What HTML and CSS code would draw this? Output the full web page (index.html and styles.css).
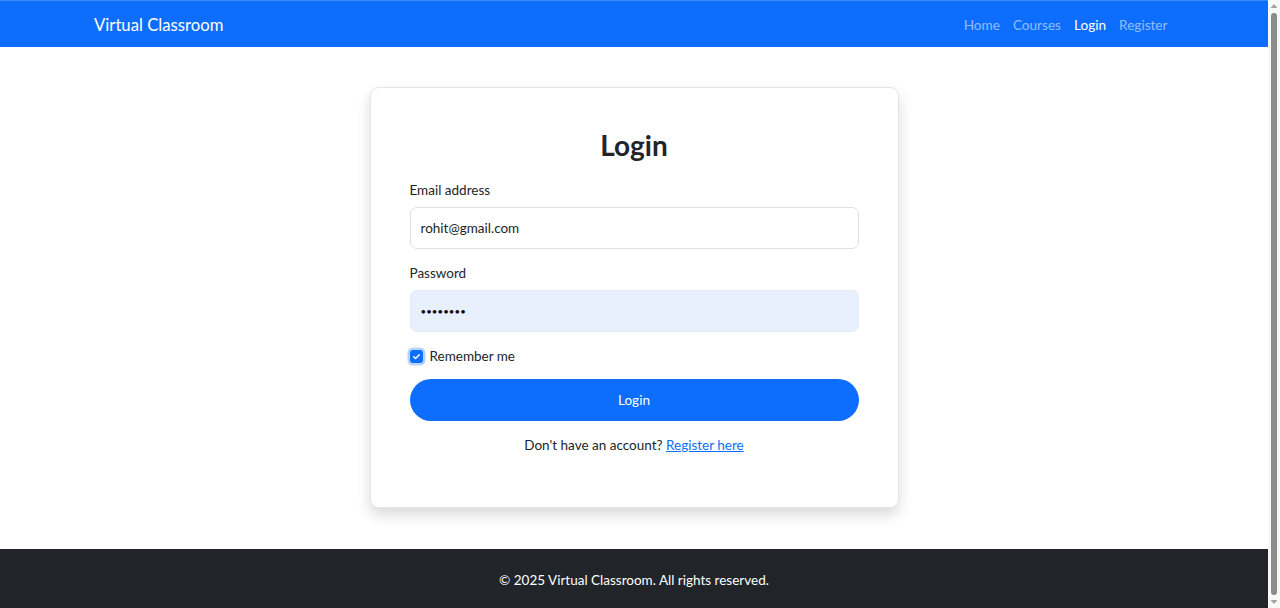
FILE: index.html
```html
<!DOCTYPE html>
<html lang="en">
<head>
    <meta charset="UTF-8">
    <meta name="viewport" content="width=device-width, initial-scale=1.0">
    <title>Login - Virtual Classroom</title>
    <link rel="stylesheet" href="styles.css">
</head>
<body>

    <nav class="navbar">
        <div class="nav-inner">
            <a class="brand" href="#">Virtual Classroom</a>
            <ul class="nav-links">
                <li><a href="#">Home</a></li>
                <li><a href="#">Courses</a></li>
                <li><a class="active" href="#">Login</a></li>
                <li><a href="#">Register</a></li>
            </ul>
        </div>
    </nav>

    <main class="page">
        <div class="card">
            <h2 class="card-title">Login</h2>

            <form class="login-form">
                <div class="field">
                    <label for="email">Email address</label>
                    <input type="email" id="email" class="input" value="rohit@gmail.com">
                </div>

                <div class="field">
                    <label for="password">Password</label>
                    <input type="text" id="password" class="input autofill" value="••••••••">
                </div>

                <div class="check-row">
                    <span class="check-box">
                        <svg width="9" height="9" viewBox="0 0 16 16"><path d="M3 8.5l3.2 3.2L13 4.8" fill="none" stroke="#fff" stroke-width="2.6" stroke-linecap="round" stroke-linejoin="round"/></svg>
                    </span>
                    <label>Remember me</label>
                </div>

                <button type="button" class="btn-login">Login</button>

                <p class="register-text">Don't have an account? <a href="#">Register here</a></p>
            </form>
        </div>
    </main>

    <footer class="footer">
        <p>&copy; 2025 Virtual Classroom. All rights reserved.</p>
    </footer>

    <!-- window scrollbar -->
    <div class="scrollbar">
        <svg class="arrow" width="12" height="12" viewBox="0 0 12 12"><path d="M2.5 8h7L6 4z" fill="#a3a3a3"/></svg>
        <div class="thumb"></div>
        <svg class="arrow" width="12" height="12" viewBox="0 0 12 12"><path d="M2.5 4h7L6 8z" fill="#a3a3a3"/></svg>
    </div>

</body>
</html>
```

FILE: styles.css
```css
body {
    margin: 0 12px 0 0;
    font-family: Lato, "Noto Sans", sans-serif;
    font-size: 13.5px;
    line-height: 1.5;
    color: #212529;
    background-color: #fff;
}
a {
    color: #0d6efd;
}

/* navbar */
.navbar {
    background-color: #0d6efd;
    height: 47px;
    border-top: 1px solid #3d8bfd;
    box-sizing: border-box;
}
.nav-inner {
    display: flex;
    align-items: center;
    justify-content: space-between;
    height: 100%;
    padding: 2px 94px 0;
    box-sizing: border-box;
}
.brand {
    color: #fff;
    font-size: 16.7px;
    text-decoration: none;
    padding-top: 1px;
}
.nav-links {
    display: flex;
    list-style: none;
    margin: 0;
    padding: 0;
}
.nav-links a {
    display: block;
    padding: 4px 6.5px;
    color: rgba(255, 255, 255, 0.55);
    text-decoration: none;
    font-size: 13.6px;
}
.nav-links a.active {
    color: #fff;
}

/* login card */
.page {
    display: flex;
    justify-content: center;
    padding: 40px 0 41px;
}
.card {
    width: 449px;
    padding: 39px 39px 39px;
    border: 1px solid #e3e5e8;
    border-radius: 9px;
    box-shadow: 0 7px 14px rgba(0, 0, 0, 0.15);
}
.card-title {
    margin: 0 0 18px;
    height: 34px;
    text-align: center;
    font-size: 28px;
    font-weight: 700;
    line-height: 36px;
}
.field {
    margin-bottom: 13px;
}
.field label {
    display: block;
    margin-bottom: 6px;
    line-height: 22px;
}
.input {
    box-sizing: border-box;
    display: block;
    width: 100%;
    height: 42px;
    padding: 0 10px;
    border: 1px solid #dee2e6;
    border-radius: 7px;
    font-family: inherit;
    font-size: 13.5px;
    color: #212529;
    background-color: #fff;
    outline: none;
}
.input.autofill {
    background-color: #e8f0fe;
    border-color: #e3ebf9;
    color: #000;
    font-size: 9.6px;
    letter-spacing: 0.1px;
}
.check-row {
    display: flex;
    align-items: center;
    gap: 7px;
    height: 22px;
    margin-bottom: 12px;
}
.check-box {
    display: flex;
    align-items: center;
    justify-content: center;
    width: 13px;
    height: 13px;
    border-radius: 3px;
    background-color: #0d6efd;
    box-shadow: 0 0 0 2.5px rgba(13, 110, 253, 0.3);
}
.btn-login {
    display: block;
    width: 100%;
    height: 42px;
    border: none;
    border-radius: 21px;
    background-color: #0d6efd;
    color: #fff;
    font-family: inherit;
    font-size: 13.5px;
    cursor: pointer;
}
.btn-login:hover {
    background-color: #0b5ed7;
}
.register-text {
    margin: 13px 0 12px;
    line-height: 22px;
    text-align: center;
}

/* footer */
.footer {
    background-color: #212529;
    color: #fff;
    text-align: center;
    padding: 18px 0;
}
.footer p {
    margin: 0;
    line-height: 26px;
}

/* scrollbar */
.scrollbar {
    position: fixed;
    top: 0;
    right: 0;
    width: 12px;
    height: 100%;
    display: flex;
    flex-direction: column;
    align-items: center;
    background-color: #f8f8f8;
}
.thumb {
    flex: 1;
    width: 6px;
    margin: 1px 0;
    border-radius: 3px;
    background-color: #8b8b8b;
}
```
